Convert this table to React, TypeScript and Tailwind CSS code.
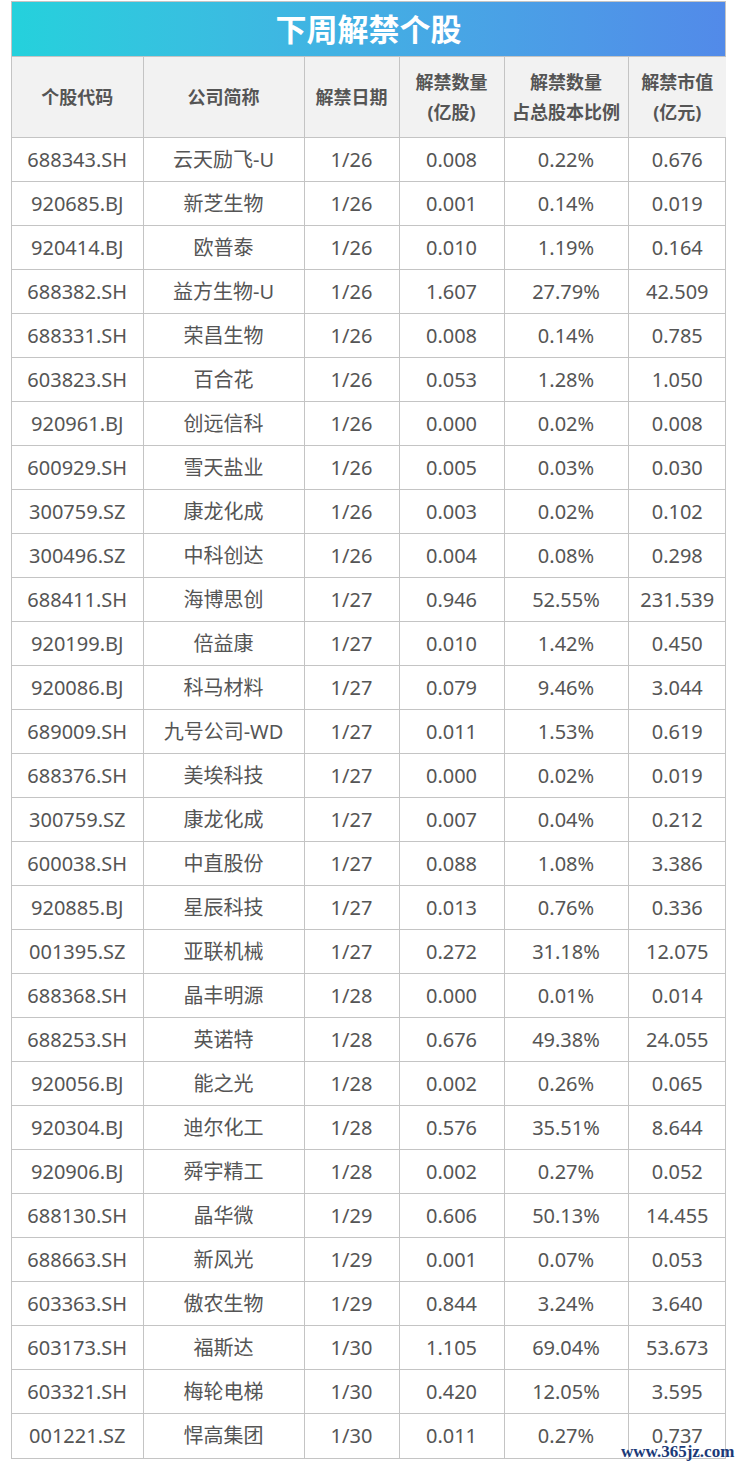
import React from "react";

const rows: string[][] = [
  ["688343.SH", "云天励飞-U", "1/26", "0.008", "0.22%", "0.676"],
  ["920685.BJ", "新芝生物", "1/26", "0.001", "0.14%", "0.019"],
  ["920414.BJ", "欧普泰", "1/26", "0.010", "1.19%", "0.164"],
  ["688382.SH", "益方生物-U", "1/26", "1.607", "27.79%", "42.509"],
  ["688331.SH", "荣昌生物", "1/26", "0.008", "0.14%", "0.785"],
  ["603823.SH", "百合花", "1/26", "0.053", "1.28%", "1.050"],
  ["920961.BJ", "创远信科", "1/26", "0.000", "0.02%", "0.008"],
  ["600929.SH", "雪天盐业", "1/26", "0.005", "0.03%", "0.030"],
  ["300759.SZ", "康龙化成", "1/26", "0.003", "0.02%", "0.102"],
  ["300496.SZ", "中科创达", "1/26", "0.004", "0.08%", "0.298"],
  ["688411.SH", "海博思创", "1/27", "0.946", "52.55%", "231.539"],
  ["920199.BJ", "倍益康", "1/27", "0.010", "1.42%", "0.450"],
  ["920086.BJ", "科马材料", "1/27", "0.079", "9.46%", "3.044"],
  ["689009.SH", "九号公司-WD", "1/27", "0.011", "1.53%", "0.619"],
  ["688376.SH", "美埃科技", "1/27", "0.000", "0.02%", "0.019"],
  ["300759.SZ", "康龙化成", "1/27", "0.007", "0.04%", "0.212"],
  ["600038.SH", "中直股份", "1/27", "0.088", "1.08%", "3.386"],
  ["920885.BJ", "星辰科技", "1/27", "0.013", "0.76%", "0.336"],
  ["001395.SZ", "亚联机械", "1/27", "0.272", "31.18%", "12.075"],
  ["688368.SH", "晶丰明源", "1/28", "0.000", "0.01%", "0.014"],
  ["688253.SH", "英诺特", "1/28", "0.676", "49.38%", "24.055"],
  ["920056.BJ", "能之光", "1/28", "0.002", "0.26%", "0.065"],
  ["920304.BJ", "迪尔化工", "1/28", "0.576", "35.51%", "8.644"],
  ["920906.BJ", "舜宇精工", "1/28", "0.002", "0.27%", "0.052"],
  ["688130.SH", "晶华微", "1/29", "0.606", "50.13%", "14.455"],
  ["688663.SH", "新风光", "1/29", "0.001", "0.07%", "0.053"],
  ["603363.SH", "傲农生物", "1/29", "0.844", "3.24%", "3.640"],
  ["603173.SH", "福斯达", "1/30", "1.105", "69.04%", "53.673"],
  ["603321.SH", "梅轮电梯", "1/30", "0.420", "12.05%", "3.595"],
  ["001221.SZ", "悍高集团", "1/30", "0.011", "0.27%", "0.737"],
];

const widths = ["w-[131px]", "w-[161px]", "w-[95px]", "w-[105px]", "w-[124px]", "w-[98px]"];

export default function App() {
  return (
    <div className="relative w-[744px] h-[1467px] bg-white pt-px pl-[11px] font-['Noto_Sans','Noto_Sans_CJK_SC',sans-serif] text-[#555555]">
      <div className="w-[715px] border border-[#c4c4c4]">
        <div className="h-[54px] flex items-center justify-center bg-gradient-to-r from-[#24d1dc] to-[#528ae9] text-white text-[31px] font-bold leading-none">
          下周解禁个股
        </div>
        <table className="w-[713px] border-collapse table-fixed">
          <thead>
            <tr className="bg-[#f2f2f2] h-[81px] text-[18px] font-bold leading-[30px]">
              <th className={`${widths[0]} border border-l-0 border-[#c4c4c4] font-bold`}>个股代码</th>
              <th className={`${widths[1]} border border-[#c4c4c4] font-bold`}>公司简称</th>
              <th className={`${widths[2]} border border-[#c4c4c4] font-bold`}>解禁日期</th>
              <th className={`${widths[3]} border border-[#c4c4c4] font-bold`}>
                解禁数量
                <br />
                (亿股)
              </th>
              <th className={`${widths[4]} border border-[#c4c4c4] font-bold`}>
                解禁数量
                <br />
                占总股本比例
              </th>
              <th className={`${widths[5]} border border-r-0 border-[#c4c4c4] font-bold`}>
                解禁市值
                <br />
                (亿元)
              </th>
            </tr>
          </thead>
          <tbody>
            {rows.map((r, i) => (
              <tr key={i} className="h-[44px] text-[20px] leading-none">
                {r.map((c, j) => (
                  <td
                    key={j}
                    className={`border border-[#c4c4c4] text-center ${j === 0 ? "border-l-0" : ""} ${j === 5 ? "border-r-0" : ""} ${i === rows.length - 1 ? "border-b-0" : ""}`}
                  >
                    {c}
                  </td>
                ))}
              </tr>
            ))}
          </tbody>
        </table>
      </div>
      <div className="absolute left-[621px] top-[1443px] text-[17px] font-bold text-[#1b3a78] font-['Liberation_Serif',serif] leading-none tracking-[0px]">
        www.365jz.com
      </div>
    </div>
  );
}
